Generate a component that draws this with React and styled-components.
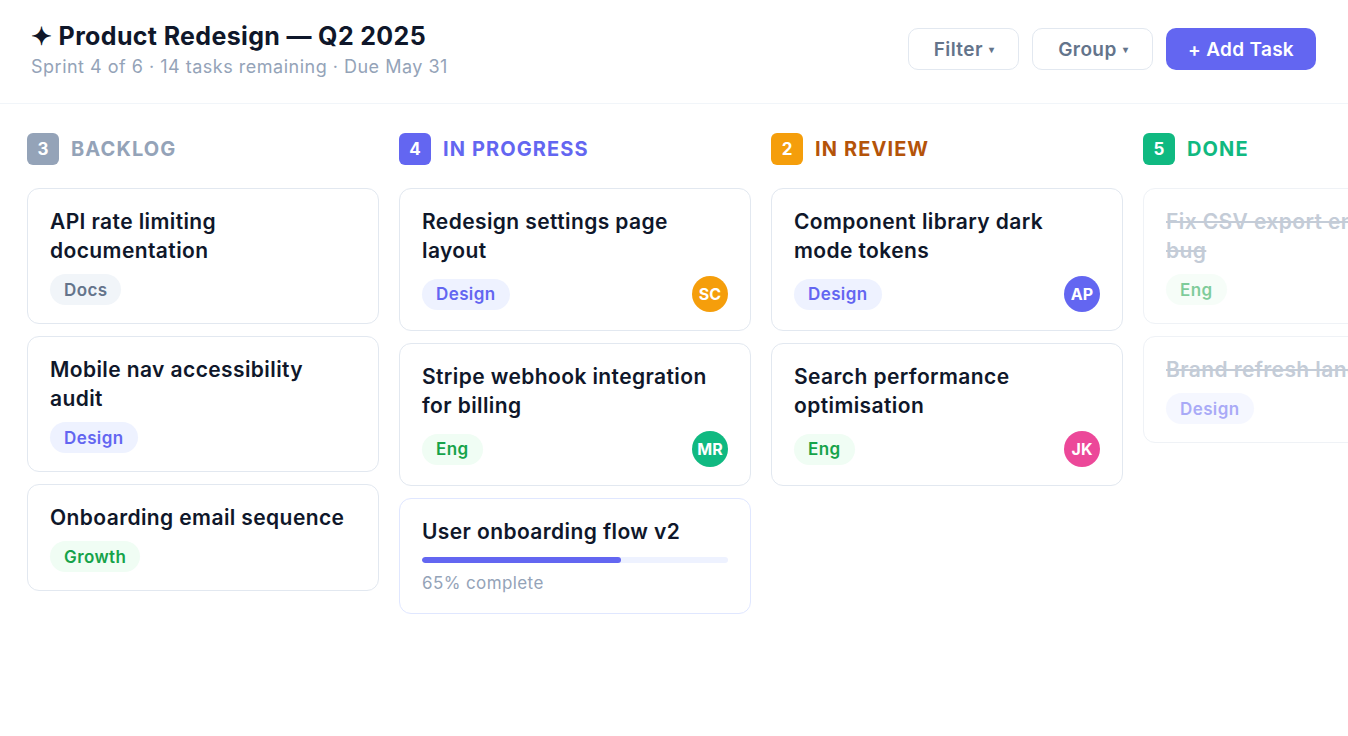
import React from "react";
import styled, { createGlobalStyle } from "styled-components";

const Global = createGlobalStyle`
  html, body { margin: 0; padding: 0; background: #ffffff; }
  body { font-family: Inter, "Noto Sans", sans-serif; color: #0f172a; overflow: hidden; }
  * { box-sizing: border-box; }
`;

const Page = styled.div`
  width: 1348px;
  height: 736px;
  overflow: hidden;
  background: #fff;
`;

const Header = styled.header`
  display: flex;
  justify-content: space-between;
  align-items: flex-start;
  padding: 20px 32px 0 31px;
  height: 104px;
  border-bottom: 1px solid #f1f5f9;
`;

const TitleBlock = styled.div`
  display: flex;
  flex-direction: column;
  gap: 2px;
`;

const Title = styled.h1`
  margin: 0;
  font-size: 25px;
  font-weight: 700;
  letter-spacing: 0.35px;
  line-height: 32px;
  color: #0f172a;
`;

const Subtitle = styled.div`
  font-size: 18px;
  line-height: 26px;
  letter-spacing: 0.5px;
  color: #94a3b8;
`;

const Actions = styled.div`
  display: flex;
  gap: 13px;
  margin-top: 8px;
`;

const GhostButton = styled.button`
  font-family: inherit;
  height: 42px;
  padding: 0 24px 0 25px;
  border: 1px solid #e2e8f0;
  border-radius: 10px;
  background: #fff;
  color: #64748b;
  font-size: 19px;
  font-weight: 600;
  letter-spacing: 0.4px;
  display: flex;
  align-items: center;
  gap: 6px;
  span { font-size: 10px; }
`;

const PrimaryButton = styled.button`
  font-family: inherit;
  height: 42px;
  padding: 0 22px;
  border: none;
  border-radius: 10px;
  background: #6366f1;
  color: #fff;
  font-size: 19px;
  font-weight: 600;
  letter-spacing: 0.3px;
`;

const Board = styled.div`
  display: flex;
  gap: 20px;
  padding: 28px 27px;
`;

const Column = styled.section`
  flex: 0 0 352px;
  display: flex;
  flex-direction: column;
  gap: 12px;
`;

const ColHeader = styled.div`
  display: flex;
  align-items: center;
  gap: 12px;
  height: 32px;
  margin: 1px 0 11px;
`;

const Count = styled.div`
  width: 32px;
  height: 32px;
  border-radius: 6px;
  background: ${(p) => p.$bg};
  color: #fff;
  font-size: 17px;
  font-weight: 700;
  display: flex;
  align-items: center;
  justify-content: center;
`;

const ColLabel = styled.div`
  font-size: 20px;
  font-weight: 700;
  letter-spacing: 1.1px;
  color: ${(p) => p.$color};
`;

const Card = styled.article`
  border: 1px solid ${(p) => (p.$accent ? "#e0e7ff" : "#e2e8f0")};
  border-radius: 12px;
  padding: 18px 22px 18px;
  background: #fff;
  opacity: ${(p) => (p.$done ? 0.55 : 1)};
`;

const CardTitle = styled.div`
  font-size: 21px;
  font-weight: 600;
  letter-spacing: 0.4px;
  line-height: 29px;
  color: ${(p) => (p.$done ? "#94a3b8" : "#0f172a")};
  text-decoration: ${(p) => (p.$done ? "line-through" : "none")};
  white-space: ${(p) => (p.$done ? "nowrap" : "normal")};
`;

const CardFooter = styled.div`
  display: flex;
  align-items: center;
  justify-content: space-between;
  margin-top: ${(p) => (p.$avatar ? "11px" : "9px")};
`;

const tagColors = {
  Docs: ["#f1f5f9", "#64748b"],
  Design: ["#eef2ff", "#6366f1"],
  Eng: ["#f0fdf4", "#16a34a"],
  Growth: ["#f0fdf4", "#16a34a"],
};

const Tag = styled.span`
  display: inline-flex;
  align-items: center;
  height: 31px;
  padding: 0 14px;
  border-radius: 16px;
  font-size: 17px;
  font-weight: 600;
  letter-spacing: 0.4px;
  background: ${(p) => tagColors[p.$kind][0]};
  color: ${(p) => tagColors[p.$kind][1]};
`;

const Avatar = styled.div`
  width: 36px;
  height: 36px;
  border-radius: 50%;
  background: ${(p) => p.$bg};
  color: #fff;
  font-size: 16px;
  font-weight: 700;
  display: flex;
  align-items: center;
  justify-content: center;
`;

const Progress = styled.div`
  margin-top: 11px;
  height: 6px;
  border-radius: 3px;
  background: #eef2ff;
  overflow: hidden;
`;

const ProgressFill = styled.div`
  height: 100%;
  background: #6366f1;
  border-radius: 3px;
`;

const ProgressLabel = styled.div`
  margin-top: 8px;
  font-size: 17px;
  line-height: 24px;
  letter-spacing: 0.4px;
  color: #94a3b8;
`;

const columns = [
  {
    label: "BACKLOG",
    badge: "#94a3b8",
    color: "#94a3b8",
    count: 3,
    cards: [
      { title: "API rate limiting documentation", tag: "Docs" },
      { title: "Mobile nav accessibility audit", tag: "Design" },
      { title: "Onboarding email sequence", tag: "Growth" },
    ],
  },
  {
    label: "IN PROGRESS",
    badge: "#6366f1",
    color: "#6366f1",
    count: 4,
    cards: [
      { title: "Redesign settings page layout", tag: "Design", avatar: ["SC", "#f59e0b"] },
      { title: "Stripe webhook integration for billing", tag: "Eng", avatar: ["MR", "#10b981"] },
      { title: "User onboarding flow v2", progress: 65 },
    ],
  },
  {
    label: "IN REVIEW",
    badge: "#f59e0b",
    color: "#b45309",
    count: 2,
    cards: [
      { title: "Component library dark mode tokens", tag: "Design", avatar: ["AP", "#6366f1"] },
      { title: "Search performance optimisation", tag: "Eng", avatar: ["JK", "#ec4899"] },
    ],
  },
  {
    label: "DONE",
    badge: "#10b981",
    color: "#10b981",
    count: 5,
    done: true,
    cards: [
      { title: ["Fix CSV export encoding", "bug"], tag: "Eng" },
      { title: ["Brand refresh landing page"], tag: "Design" },
    ],
  },
];

export default function App() {
  return (
    <Page>
      <Global />
      <Header>
        <TitleBlock>
          <Title>✦ Product Redesign — Q2 2025</Title>
          <Subtitle>Sprint 4 of 6 · 14 tasks remaining · Due May 31</Subtitle>
        </TitleBlock>
        <Actions>
          <GhostButton>Filter <span>▾</span></GhostButton>
          <GhostButton>Group <span>▾</span></GhostButton>
          <PrimaryButton>+ Add Task</PrimaryButton>
        </Actions>
      </Header>
      <Board>
        {columns.map((col) => (
          <Column key={col.label}>
            <ColHeader>
              <Count $bg={col.badge}>{col.count}</Count>
              <ColLabel $color={col.color}>{col.label}</ColLabel>
            </ColHeader>
            {col.cards.map((c, i) => (
              <Card key={i} $done={col.done} $accent={c.progress != null}>
                <CardTitle $done={col.done}>
                  {Array.isArray(c.title)
                    ? c.title.map((t, j) => <div key={j}>{t}</div>)
                    : c.title}
                </CardTitle>
                {c.progress != null ? (
                  <>
                    <Progress>
                      <ProgressFill style={{ width: `${c.progress}%` }} />
                    </Progress>
                    <ProgressLabel>{c.progress}% complete</ProgressLabel>
                  </>
                ) : (
                  <CardFooter $avatar={!!c.avatar}>
                    <Tag $kind={c.tag}>{c.tag}</Tag>
                    {c.avatar && <Avatar $bg={c.avatar[1]}>{c.avatar[0]}</Avatar>}
                  </CardFooter>
                )}
              </Card>
            ))}
          </Column>
        ))}
      </Board>
    </Page>
  );
}
